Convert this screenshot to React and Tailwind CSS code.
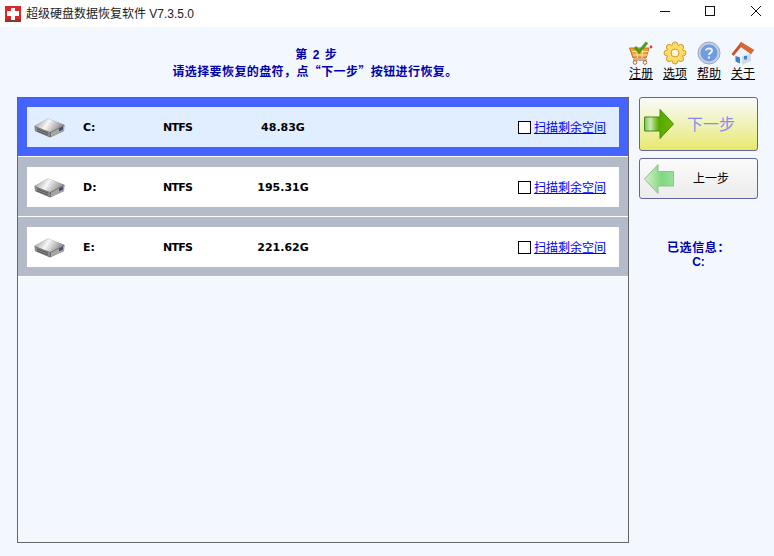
import React from "react";

const drives = [
  { name: "C:", size: "48.83G", active: true },
  { name: "D:", size: "195.31G" },
  { name: "E:", size: "221.62G" },
];

const DiskIcon = () => (
  <svg width="32" height="20" viewBox="0 0 32 20">
    <defs>
      <linearGradient id="diskTop" x1="0" y1="0" x2="1" y2="0.3">
        <stop offset="0" stopColor="#8a8a8a" />
        <stop offset="0.5" stopColor="#f6f6f6" />
        <stop offset="1" stopColor="#8e8e8e" />
      </linearGradient>
    </defs>
    <path d="M0.5 8 L14 0.5 L30.5 7 L30 13 L16 19.5 L1 13 Z" fill="#6f6f6f" />
    <path d="M0.5 8 L14 0.5 L30.5 7 L16 14 Z" fill="url(#diskTop)" />
    <path d="M1 9 L16 14.5 L16 19 L1 13 Z" fill="#8b8b8b" />
    <path d="M17 14.5 L30 8 L30 13 L17 19 Z" fill="#a6a6a6" />
    <path d="M3 11 L14 15 M3 13 L14 17" stroke="#555" strokeWidth="1" />
    <path d="M25 10.5 L29 8.5 L29 11.5 L25 13.5 Z" fill="#444a78" />
  </svg>
);

const CartIcon = () => (
  <svg width="24" height="24" viewBox="0 0 24 24">
    <path d="M0.5 7 L20 7 L17 17 L4 17 Z" fill="#f2a13a" stroke="#c9701c" strokeWidth="1" />
    <path d="M3 10.5 L19 10.5 M4 14 L18 14 M7.5 7 L8.5 17 M13.5 7 L13 17" stroke="#fbe0b0" strokeWidth="1" />
    <path d="M4 19 L18 19" stroke="#a8612a" strokeWidth="1" />
    <circle cx="6" cy="21.5" r="1.8" fill="#fff" stroke="#b5651d" />
    <circle cx="16" cy="21.5" r="1.8" fill="#fff" stroke="#b5651d" />
    <path d="M6 6 L10 11 L18 1.5" fill="none" stroke="#4f9e12" strokeWidth="3" />
    <circle cx="22" cy="6" r="1.4" fill="#d83a3a" />
  </svg>
);

const GearIcon = () => (
  <svg width="24" height="24" viewBox="0 0 24 24">
    <g fill="#fbd964" stroke="#d69a22" strokeWidth="1">
      <circle cx="12" cy="3.8" r="2.8" />
      <circle cx="12" cy="20.2" r="2.8" />
      <circle cx="3.8" cy="12" r="2.8" />
      <circle cx="20.2" cy="12" r="2.8" />
      <circle cx="6.2" cy="6.2" r="2.8" />
      <circle cx="17.8" cy="6.2" r="2.8" />
      <circle cx="6.2" cy="17.8" r="2.8" />
      <circle cx="17.8" cy="17.8" r="2.8" />
    </g>
    <circle cx="12" cy="12" r="8" fill="#fcdc6c" />
    <circle cx="12" cy="12" r="4" fill="#fff6d8" stroke="#d69a22" />
  </svg>
);

const HelpIcon = () => (
  <svg width="24" height="24" viewBox="0 0 24 24">
    <circle cx="12" cy="12" r="11" fill="#c4cfe0" stroke="#9aa8c2" />
    <circle cx="12" cy="12" r="8.5" fill="#6f9be0" />
    <path d="M9 9.5 C9 6.8 15 6.8 15 9.8 C15 12 12 11.8 12 14" fill="none" stroke="#eaf2ff" strokeWidth="2" />
    <rect x="11" y="15.5" width="2" height="2" fill="#eaf2ff" />
  </svg>
);

const HomeIcon = () => (
  <svg width="24" height="24" viewBox="0 0 24 24">
    <path d="M3 12 L11 7 L20 12 L20 20 L11 24 L3 20 Z" fill="#eef3f8" />
    <path d="M11 15 L20 12 L20 20 L11 24 Z" fill="#cfdbe8" />
    <path d="M4.5 15 L9 16.5 L9 22.5 L4.5 20.5 Z" fill="#3f82c8" />
    <rect x="13" y="15" width="3" height="3.5" fill="#3f82c8" />
    <path d="M0.5 13 L10 1 L23 9 L20 13 L10 6 L2.5 15 Z" fill="#c8552a" />
    <path d="M10 1 L23 9 L20 13 L9 5 Z" fill="#d96a35" />
  </svg>
);

const ToolItem = ({ icon, label }) => (
  <div className="flex w-[34px] flex-col items-center">
    <div className="h-[24px]">{icon}</div>
    <span className="mt-[2px] text-[12px] leading-[14px] text-black underline">{label}</span>
  </div>
);

const ArrowIcon = ({ left, id, stops, edge }) => (
  <svg width="30" height="30" viewBox="0 0 30 30">
    <defs>
      <linearGradient id={id} x1="0" y1="0" x2="1" y2="0">
        {stops.map((s, i) => (
          <stop key={i} offset={s[0]} stopColor={s[1]} />
        ))}
      </linearGradient>
    </defs>
    <path
      d={left ? "M0.5 15 L14 0.5 L14 7.5 L29.5 7.5 L29.5 22 L14 22 L14 29.5 Z" : "M0.5 8 L16 8 L16 0.5 L29.5 15 L16 29.5 L16 22 L0.5 22 Z"}
      fill={`url(#${id})`}
      stroke={edge}
      strokeWidth="1"
    />
  </svg>
);

const DriveRow = ({ drive }) => (
  <div
    className={`border-b border-white px-[9px] ${
      drive.active ? "h-[59px] bg-[#4564ff] pt-[9px]" : "h-[60px] bg-[#b4bbc8] pt-[10px]"
    }`}
  >
    <div className={`flex h-[40px] items-center pt-[2px] ${drive.active ? "bg-[#e0eeff]" : "bg-white"}`}>
      <div className="ml-[7px] w-[49px]">
        <DiskIcon />
      </div>
      <span className="w-[80px] text-[11px] font-bold" style={{ fontFamily: '"DejaVu Sans", sans-serif' }}>
        {drive.name}
      </span>
      <span className="w-[80px] text-[11px] font-bold tracking-[-0.75px]" style={{ fontFamily: '"DejaVu Sans", sans-serif' }}>
        NTFS
      </span>
      <span className="w-[80px] text-center text-[11px] font-bold" style={{ fontFamily: '"DejaVu Sans", sans-serif' }}>
        {drive.size}
      </span>
      <div className="ml-auto mr-[13px] flex items-center">
        <div className="-mt-[1px] h-[13px] w-[13px] border border-black bg-white" />
        <span className="ml-[3px] text-[12px] leading-[14px] text-[#0000ff] underline">扫描剩余空间</span>
      </div>
    </div>
  </div>
);

export default function App() {
  return (
    <div
      className="flex h-[556px] w-[774px] flex-col overflow-hidden bg-[#f3f8ff] text-black"
      style={{ fontFamily: '"Liberation Sans", "Noto Sans CJK SC", sans-serif' }}
    >
      {/* title bar */}
      <div className="flex h-[27px] items-center bg-white pl-[5px]">
        <svg width="16" height="16" viewBox="0 0 16 16">
          <rect width="16" height="16" fill="#d9282c" />
          <rect y="13" width="16" height="3" fill="#8a3a2c" />
          <path d="M6 2 H10 V5 H14 V10 H10 V14 H6 V10 H2 V5 H6 Z" fill="#fff" />
        </svg>
        <span className="ml-[5px] text-[12px] text-[#222]">超级硬盘数据恢复软件 V7.3.5.0</span>
        <div className="ml-auto flex items-center">
          <svg width="46" height="27" viewBox="0 0 46 27">
            <path d="M24 11.5 H34" stroke="#111" strokeWidth="1" />
          </svg>
          <svg width="46" height="27" viewBox="0 0 46 27">
            <rect x="23.5" y="6.5" width="9" height="9" fill="none" stroke="#111" />
          </svg>
          <svg width="46" height="27" viewBox="0 0 46 27">
            <path d="M23 6 L33 16 M33 6 L23 16" stroke="#111" strokeWidth="1" />
          </svg>
        </div>
      </div>

      {/* step text and toolbar */}
      <div className="flex h-[70px]">
        <div className="ml-[17px] flex w-[596px] flex-col items-center pt-[21px] text-[12px] font-bold text-[#0000aa]">
          <span className="pl-[3px] leading-[14px] tracking-[1px]">第 2 步</span>
          <span className="leading-[17px] tracking-[0.4px]" style={{ fontFamily: '"Noto Sans CJK SC", sans-serif' }}>
            请选择要恢复的盘符，点“下一步”按钮进行恢复。
          </span>
        </div>
        <div className="ml-[11px] mt-[14px] flex">
          <ToolItem icon={<CartIcon />} label="注册" />
          <ToolItem icon={<GearIcon />} label="选项" />
          <ToolItem icon={<HelpIcon />} label="帮助" />
          <ToolItem icon={<HomeIcon />} label="关于" />
        </div>
      </div>

      <div className="flex flex-1">
        {/* drive list */}
        <div className="ml-[17px] h-[446px] w-[612px] border border-[#666] bg-[#f3f8ff]">
          {drives.map((d) => (
            <DriveRow key={d.name} drive={d} />
          ))}
        </div>

        {/* buttons */}
        <div className="ml-[10px] flex w-[119px] flex-col">
          <div className="flex h-[54px] items-center rounded-[3px] border border-[#64649c] bg-gradient-to-b from-[#fafafa] to-[#e8e868] pl-[4px]">
            <ArrowIcon id="nextArrow" edge="#3f8f10" stops={[[0, "#7fc24a"], [0.2, "#d0e8b8"], [0.35, "#8ccc50"], [0.5, "#55a800"], [1, "#6fb800"]]} />
            <span className="ml-[13px] mt-[1px] text-[16px] text-[#8a8af5]">下一步</span>
          </div>
          <div className="mt-[7px] flex h-[41px] items-center rounded-[3px] border border-[#64649c] bg-gradient-to-b from-[#fbfbfb] to-[#ececec] pl-[4px]">
            <ArrowIcon left id="prevArrow" edge="#8fc08f" stops={[[0, "#d8f0c8"], [0.6, "#80d880"], [1, "#9be09b"]]} />
            <span className="ml-[19px] mt-[1px] text-[12px]">上一步</span>
          </div>
          <div className="mt-[42px] flex flex-col items-center text-[12px] font-bold leading-[14px] text-[#0000aa]">
            <span className="tracking-[0.6px]">已选信息：</span>
            <span>C:</span>
          </div>
        </div>
      </div>
    </div>
  );
}
